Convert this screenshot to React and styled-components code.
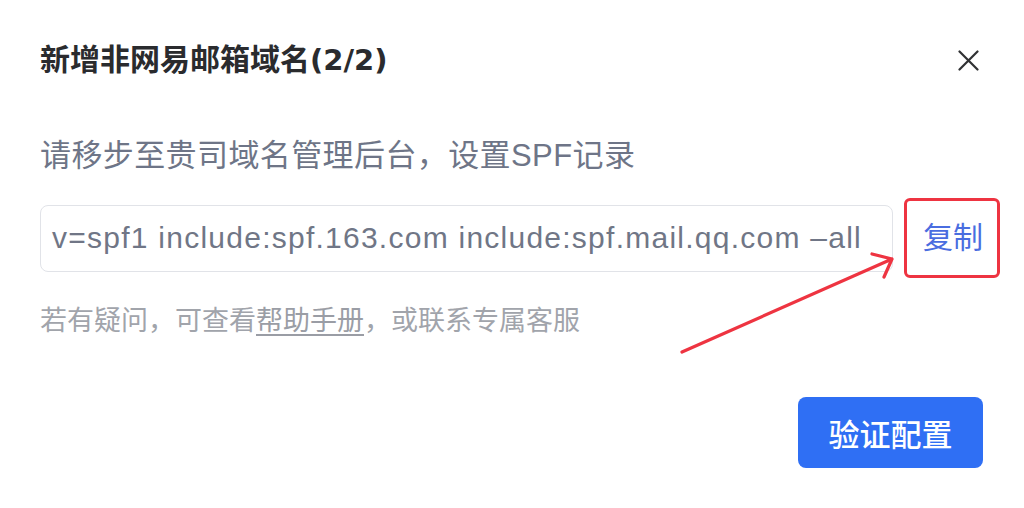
import React from 'react'
import styled, { createGlobalStyle } from 'styled-components'

const GlobalStyle = createGlobalStyle`
  html, body {
    margin: 0;
    padding: 0;
    background: #ffffff;
  }
  body {
    font-family: "Liberation Sans", "Noto Sans CJK SC", sans-serif;
  }
`

const SPF_RECORD = 'v=spf1 include:spf.163.com include:spf.mail.qq.com –all'

function App() {
  return (
    <>
      <GlobalStyle />
      <Dialog>
        <Header>
          <Title>
            新增非网易邮箱域名<Count>(2/2)</Count>
          </Title>
          <CloseButton aria-label="关闭">
            <svg width="21" height="21" viewBox="0 0 21 21">
              <path d="M1.5 1.5 19.5 19.5 M19.5 1.5 1.5 19.5" stroke="#303133" strokeWidth="2.2" strokeLinecap="round" />
            </svg>
          </CloseButton>
        </Header>

        <Hint>请移步至贵司域名管理后台，设置SPF记录</Hint>

        <RecordRow>
          <RecordBox>{SPF_RECORD}</RecordBox>
          <CopyLink>复制</CopyLink>
        </RecordRow>

        <Help>
          若有疑问，可查看<HelpLink>帮助手册</HelpLink>，或联系专属客服
        </Help>

        <Footer>
          <PrimaryButton>验证配置</PrimaryButton>
        </Footer>

        {/* annotation arrow pointing at the copy link */}
        <Arrow width="226" height="110" viewBox="0 0 226 110">
          <path
            d="M6 103 L216 10 M196 5 L216 10 L208 28"
            fill="none"
            stroke="#ee3441"
            strokeWidth="3.2"
            strokeLinecap="round"
            strokeLinejoin="round"
          />
        </Arrow>
      </Dialog>
    </>
  )
}

export default App

const Dialog = styled.div`
  position: relative;
  width: 1024px;
  height: 508px;
  box-sizing: border-box;
  padding: 40px 41px 0 40px;
  background: #ffffff;
  display: flex;
  flex-direction: column;
  overflow: hidden;
`

const Header = styled.div`
  display: flex;
  align-items: center;
  justify-content: space-between;
  height: 40px;
`

const Title = styled.h2`
  margin: 0;
  font-size: 30px;
  line-height: 40px;
  font-weight: 600;
  color: #2a2b2e;
`

const Count = styled.span`
  font-family: "DejaVu Sans", "Liberation Sans", sans-serif;
  font-size: 29px;
  font-weight: 700;
`

const CloseButton = styled.button`
  border: none;
  background: none;
  padding: 0;
  margin-right: 4px;
  width: 21px;
  height: 21px;
  display: flex;
  cursor: pointer;
`

const Hint = styled.p`
  margin: 56px 0 22px;
  font-size: 31px;
  line-height: 40px;
  letter-spacing: 0.4px;
  color: #6e7587;
`

const RecordRow = styled.div`
  display: flex;
  align-items: center;
  height: 80px;
`

const RecordBox = styled.div`
  flex: 1;
  height: 67px;
  box-sizing: border-box;
  padding-left: 11px;
  display: flex;
  align-items: center;
  border: 1.5px solid #e1e3e8;
  border-radius: 8px;
  font-size: 30px;
  letter-spacing: 1.25px;
  color: #707686;
  white-space: nowrap;
  overflow: hidden;
`

const CopyLink = styled.span`
  position: relative;
  margin-left: 30px;
  font-size: 30px;
  line-height: 40px;
  color: #4a6de0;
  cursor: pointer;

  &::after {
    content: '';
    position: absolute;
    top: -20px;
    bottom: -20px;
    left: -19px;
    right: -17px;
    border: 3px solid #ee3441;
    border-radius: 6px;
  }
`

const Help = styled.p`
  margin: 25px 0 0;
  font-size: 27px;
  line-height: 36px;
  color: #a1a4ab;
`

const HelpLink = styled.a`
  color: #9a9da5;
  text-decoration: underline;
  text-underline-offset: 4px;
  cursor: pointer;
`

const Footer = styled.div`
  display: flex;
  justify-content: flex-end;
  margin-top: 58px;
`

const PrimaryButton = styled.button`
  width: 185px;
  height: 71px;
  border: none;
  border-radius: 8px;
  background: #2f6ff4;
  color: #ffffff;
  font-family: inherit;
  font-size: 31px;
  font-weight: 500;
  cursor: pointer;
`

const Arrow = styled.svg`
  position: absolute;
  left: 676px;
  top: 249px;
  pointer-events: none;
`
